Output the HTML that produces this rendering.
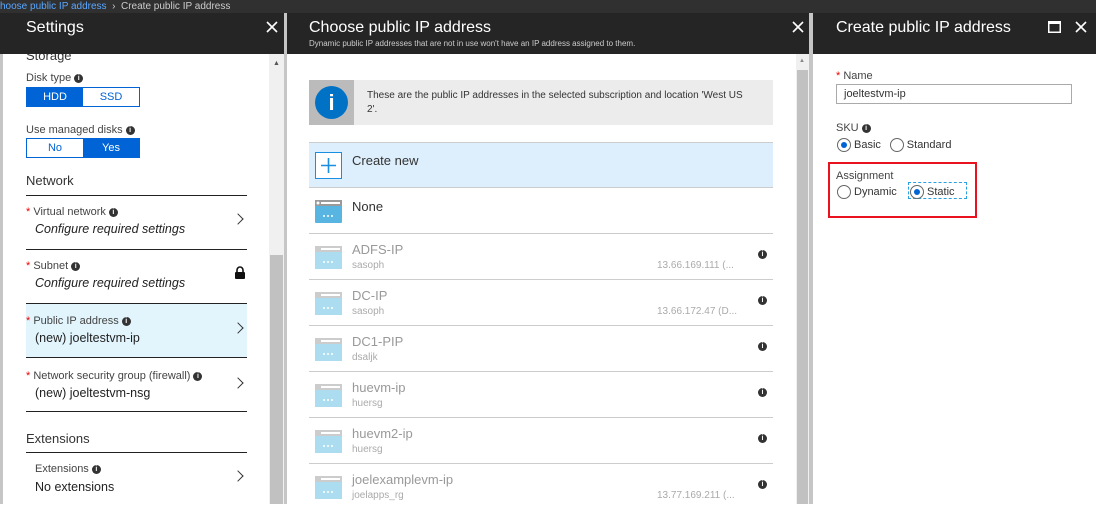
<!DOCTYPE html>
<html><head><style>
*{box-sizing:border-box;margin:0;padding:0}
body{width:1096px;height:504px;overflow:hidden;background:#fff;font-family:"Liberation Sans",sans-serif;position:relative;color:#222}
.abs{position:absolute}
.hdr{background:#252525;color:#fff;top:13px;height:41px}
.t{font-size:16px;color:#fff;top:6px;position:absolute}
.x{position:absolute;top:8px}
.lbl{font-size:11px;color:#444;position:absolute}
.val{font-size:12.5px;color:#222;position:absolute}
.i{display:inline-block;width:9px;height:9px;border-radius:50%;background:#333;color:#fff;font-size:7px;line-height:9px;text-align:center;font-weight:bold;vertical-align:1px;margin-left:3px}
.star{color:#e00;font-size:11px}
.hl{position:absolute;left:26px;width:221px;height:1px;background:#222}
.chev{position:absolute;left:234px;width:8px;height:8px;border-right:1.3px solid #333;border-top:1.3px solid #333;transform:rotate(45deg)}
.row{position:absolute;left:309px;width:464px;height:46px;border-bottom:1.5px solid #ccc}
.row .n{position:absolute;left:43px;top:8px;font-size:13px;color:#999}
.row .s{position:absolute;left:43px;top:26px;font-size:10px;color:#aaa}
.row .ip{position:absolute;left:348px;top:26px;font-size:10px;color:#aaa}
.row .in{position:absolute;left:446px;top:16px}
.row svg.ic{position:absolute;left:6px;top:12px}
.radio{display:inline-block;width:14px;height:14px;border:1px solid #666;border-radius:50%;vertical-align:middle;position:relative;background:#fff}
.radio.on::after{content:"";position:absolute;left:3px;top:3px;width:6px;height:6px;border-radius:50%;background:#0063d6}
.rt{font-size:11px;color:#333;vertical-align:middle;margin-left:3px}
</style></head><body>
<div class="abs" style="left:0;top:0;width:1096px;height:13px;background:#303030"></div>
<div class="abs" style="left:0;top:0;font-size:10px;color:#5aa7ff;line-height:13px">hoose public IP address <span style="color:#ccc">&nbsp;›&nbsp; Create public IP address</span></div>

<!-- Panel 1 -->
<div class="abs hdr" style="left:0;width:286px"><div class="t" style="left:26px">Settings</div><svg class="x" style="left:266px" width="12" height="12"><path d="M1 1L11 11M11 1L1 11" stroke="#fff" stroke-width="1.6"/></svg></div>
<div class="abs" style="left:0;top:54px;width:3px;height:450px;background:#c6c6c6"></div>
<div class="abs" style="left:284px;top:13px;width:3px;height:491px;background:#c6c6c6"></div>
<div class="abs" style="left:269px;top:54px;width:15px;height:450px;background:#f0f0f0"></div>
<div class="abs" style="left:270px;top:255px;width:13px;height:249px;background:#c1c1c1"></div>
<div class="abs" style="left:273px;top:60px;font-size:7px;color:#555">▲</div>
<div class="abs" style="left:26px;top:48px;font-size:13px;color:#333;clip-path:inset(6px 0 0 0)">Storage</div>
<div class="lbl" style="left:26px;top:72px">Disk type<span class="i">i</span></div>
<div class="abs" style="left:26px;top:87px;width:114px;height:20px;border:1px solid #0063d6;font-size:11px;display:flex"><div style="width:56px;background:#0063d6;color:#fff;text-align:center;line-height:18px">HDD</div><div style="flex:1;color:#0063d6;text-align:center;line-height:18px">SSD</div></div>
<div class="lbl" style="left:26px;top:124px">Use managed disks<span class="i">i</span></div>
<div class="abs" style="left:26px;top:138px;width:114px;height:20px;border:1px solid #0063d6;font-size:11px;display:flex"><div style="width:56px;color:#0063d6;text-align:center;line-height:18px">No</div><div style="flex:1;background:#0063d6;color:#fff;text-align:center;line-height:18px">Yes</div></div>
<div class="abs" style="left:26px;top:173px;font-size:13px;color:#333">Network</div>
<div class="hl" style="top:195px"></div>
<div class="lbl" style="left:26px;top:206px"><span class="star">*</span> Virtual network<span class="i">i</span></div>
<div class="val" style="left:35px;top:222px;font-style:italic">Configure required settings</div>
<div class="chev" style="top:215px"></div>
<div class="hl" style="top:249px"></div>
<div class="lbl" style="left:26px;top:260px"><span class="star">*</span> Subnet<span class="i">i</span></div>
<div class="val" style="left:35px;top:276px;font-style:italic">Configure required settings</div>
<svg class="abs" style="left:234px;top:266px" width="12" height="13"><path d="M3 6V4a3 3 0 0 1 6 0v2" fill="none" stroke="#111" stroke-width="1.6"/><rect x="1" y="6" width="10" height="7" rx="1" fill="#111"/></svg>
<div class="abs" style="left:26px;top:304px;width:221px;height:53px;background:#e2f5fd"></div>
<div class="hl" style="top:303px"></div>
<div class="lbl" style="left:26px;top:315px"><span class="star">*</span> Public IP address<span class="i">i</span></div>
<div class="val" style="left:35px;top:331px">(new) joeltestvm-ip</div>
<div class="chev" style="top:324px"></div>
<div class="hl" style="top:357px"></div>
<div class="lbl" style="left:26px;top:370px"><span class="star">*</span> Network security group (firewall)<span class="i">i</span></div>
<div class="val" style="left:35px;top:386px">(new) joeltestvm-nsg</div>
<div class="chev" style="top:379px"></div>
<div class="hl" style="top:411px"></div>
<div class="abs" style="left:26px;top:431px;font-size:13px;color:#333">Extensions</div>
<div class="hl" style="top:452px"></div>
<div class="lbl" style="left:35px;top:463px">Extensions<span class="i">i</span></div>
<div class="val" style="left:35px;top:480px">No extensions</div>
<div class="chev" style="top:472px"></div>

<!-- Panel 2 -->
<div class="abs hdr" style="left:287px;width:522px"><div class="t" style="left:22px">Choose public IP address</div><div class="abs" style="left:22px;top:26px;font-size:8px;color:#ccc">Dynamic public IP addresses that are not in use won't have an IP address assigned to them.</div><svg class="x" style="left:505px" width="12" height="12"><path d="M1 1L11 11M11 1L1 11" stroke="#fff" stroke-width="1.6"/></svg></div>
<div class="abs" style="left:796px;top:54px;width:13px;height:450px;background:#f0f0f0"></div>
<div class="abs" style="left:797px;top:70px;width:11px;height:434px;background:#c1c1c1"></div>
<div class="abs" style="left:799px;top:58px;font-size:6px;color:#888">▲</div>
<div class="abs" style="left:809px;top:13px;width:4px;height:491px;background:#c6c6c6"></div>
<div class="abs" style="left:309px;top:80px;width:464px;height:45px;background:#ececec"></div>
<div class="abs" style="left:309px;top:80px;width:45px;height:45px;background:#bbb"></div>
<div class="abs" style="left:315px;top:86px;width:33px;height:33px;border-radius:50%;background:#0072c6;color:#fff;font-weight:bold;font-size:22px;text-align:center;line-height:33px">i</div>
<div class="abs" style="left:367px;top:89px;font-size:10px;color:#333;width:380px;line-height:14px">These are the public IP addresses in the selected subscription and location 'West US 2'.</div>
<div class="abs" style="left:309px;top:142px;width:464px;height:46px;background:#ddeefc;border-top:1.5px solid #ccc;border-bottom:1.5px solid #ccc"></div>
<div class="abs" style="left:315px;top:152px;width:27px;height:27px;border:1px solid #1a8ee0;background:#fff"><svg width="25" height="25"><path d="M12.5 5V20M5 12.5H20" stroke="#1a8ee0" stroke-width="1.6"/></svg></div>
<div class="abs" style="left:352px;top:153px;font-size:13px;color:#333">Create new</div>
<div class="row" style="top:188px"><svg class="ic" width="27" height="23"><rect width="27" height="23" rx="1" fill="#58b4e0"/><rect width="27" height="6" fill="#9a9a9a"/><rect x="6" y="2" width="19" height="2" fill="#fff"/><circle cx="3" cy="3" r="1.5" fill="#fff"/><circle cx="9" cy="16" r="1" fill="#fff"/><circle cx="13" cy="16" r="1" fill="#fff"/><circle cx="17" cy="16" r="1" fill="#fff"/></svg><div class="n" style="color:#333;top:11px">None</div></div>
<div class="row" style="top:234px"><svg class="ic" width="27" height="23"><rect width="27" height="23" fill="#acdcef"/><rect width="27" height="6" fill="#ccc"/><rect x="6" y="2" width="19" height="2" fill="#fff"/><circle cx="9" cy="16" r="1" fill="#fff"/><circle cx="13" cy="16" r="1" fill="#fff"/><circle cx="17" cy="16" r="1" fill="#fff"/></svg><div class="n">ADFS-IP</div><div class="s">sasoph</div><div class="ip">13.66.169.111 (...</div><span class="i in">i</span></div>
<div class="row" style="top:280px"><svg class="ic" width="27" height="23"><rect width="27" height="23" fill="#acdcef"/><rect width="27" height="6" fill="#ccc"/><rect x="6" y="2" width="19" height="2" fill="#fff"/><circle cx="9" cy="16" r="1" fill="#fff"/><circle cx="13" cy="16" r="1" fill="#fff"/><circle cx="17" cy="16" r="1" fill="#fff"/></svg><div class="n">DC-IP</div><div class="s">sasoph</div><div class="ip">13.66.172.47 (D...</div><span class="i in">i</span></div>
<div class="row" style="top:326px"><svg class="ic" width="27" height="23"><rect width="27" height="23" fill="#acdcef"/><rect width="27" height="6" fill="#ccc"/><rect x="6" y="2" width="19" height="2" fill="#fff"/><circle cx="9" cy="16" r="1" fill="#fff"/><circle cx="13" cy="16" r="1" fill="#fff"/><circle cx="17" cy="16" r="1" fill="#fff"/></svg><div class="n">DC1-PIP</div><div class="s">dsaljk</div><span class="i in">i</span></div>
<div class="row" style="top:372px"><svg class="ic" width="27" height="23"><rect width="27" height="23" fill="#acdcef"/><rect width="27" height="6" fill="#ccc"/><rect x="6" y="2" width="19" height="2" fill="#fff"/><circle cx="9" cy="16" r="1" fill="#fff"/><circle cx="13" cy="16" r="1" fill="#fff"/><circle cx="17" cy="16" r="1" fill="#fff"/></svg><div class="n">huevm-ip</div><div class="s">huersg</div><span class="i in">i</span></div>
<div class="row" style="top:418px"><svg class="ic" width="27" height="23"><rect width="27" height="23" fill="#acdcef"/><rect width="27" height="6" fill="#ccc"/><rect x="6" y="2" width="19" height="2" fill="#fff"/><circle cx="9" cy="16" r="1" fill="#fff"/><circle cx="13" cy="16" r="1" fill="#fff"/><circle cx="17" cy="16" r="1" fill="#fff"/></svg><div class="n">huevm2-ip</div><div class="s">huersg</div><span class="i in">i</span></div>
<div class="row" style="top:464px;border:none"><svg class="ic" width="27" height="23"><rect width="27" height="23" fill="#acdcef"/><rect width="27" height="6" fill="#ccc"/><rect x="6" y="2" width="19" height="2" fill="#fff"/><circle cx="9" cy="16" r="1" fill="#fff"/><circle cx="13" cy="16" r="1" fill="#fff"/><circle cx="17" cy="16" r="1" fill="#fff"/></svg><div class="n">joelexamplevm-ip</div><div class="s">joelapps_rg</div><div class="ip">13.77.169.211 (...</div><span class="i in">i</span></div>

<!-- Panel 3 -->
<div class="abs hdr" style="left:813px;width:283px"><div class="t" style="left:23px">Create public IP address</div>
<svg class="x" style="left:235px" width="13" height="12"><rect x="0.75" y="0.75" width="11.5" height="10.5" fill="none" stroke="#fff" stroke-width="1.5"/><rect x="0" y="0" width="13" height="3" fill="#fff"/></svg>
<svg class="x" style="left:262px" width="12" height="12"><path d="M1 1L11 11M11 1L1 11" stroke="#fff" stroke-width="1.6"/></svg></div>
<div class="lbl" style="left:836px;top:70px"><span class="star">*</span> Name</div>
<div class="abs" style="left:836px;top:84px;width:236px;height:20px;border:1px solid #aaa;font-size:11px;color:#333;padding:3px 7px">joeltestvm-ip</div>
<div class="lbl" style="left:836px;top:122px">SKU<span class="i">i</span></div>
<div class="abs" style="left:837px;top:136px"><span class="radio on"></span><span class="rt">Basic</span> &nbsp;<span class="radio"></span><span class="rt">Standard</span></div>
<div class="abs" style="left:828px;top:162px;width:149px;height:56px;border:2px solid #e8131f"></div>
<div class="lbl" style="left:836px;top:170px">Assignment</div>
<div class="abs" style="left:837px;top:183px"><span class="radio"></span><span class="rt">Dynamic</span></div>
<div class="abs" style="left:908px;top:182px;width:59px;height:17px;border:1px dashed #2aa0e0"></div>
<div class="abs" style="left:910px;top:183px"><span class="radio on"></span><span class="rt">Static</span></div>
</body></html>
